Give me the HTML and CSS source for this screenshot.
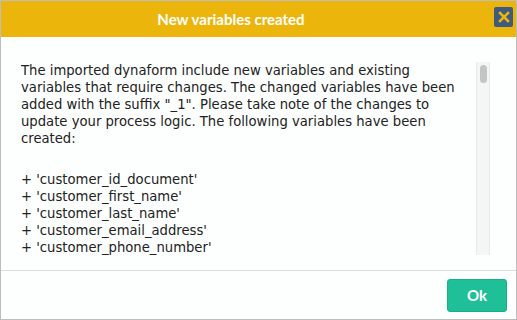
FILE: index.html
```html
<!DOCTYPE html>
<html lang="en">
<head>
    <meta charset="UTF-8">
    <title>New variables created</title>
    <link rel="stylesheet" href="styles.css">
</head>
<body>
    <div class="dialog">
        <div class="dialog-header">
            <h1>New variables created</h1>
            <button class="close-btn" aria-label="Close">
                <svg width="12" height="12" viewBox="0 0 12 12">
                    <path d="M2 2 L10 10 M10 2 L2 10" stroke="#ecb50c" stroke-width="2.6" stroke-linecap="square"/>
                </svg>
            </button>
        </div>

        <div class="dialog-body">
            <div class="scroll-box">
                <p>The imported dynaform include new variables and existing variables that require changes. The changed variables have been added with the suffix "_1". Please take note of the changes to update your process logic. The following variables have been created:</p>
                <ul class="var-list">
                    <li>+ 'customer_id_document'</li>
                    <li>+ 'customer_first_name'</li>
                    <li>+ 'customer_last_name'</li>
                    <li>+ 'customer_email_address'</li>
                    <li>+ 'customer_phone_number'</li>
                </ul>
            </div>
            <div class="scrollbar">
                <div class="scrollbar-thumb"></div>
            </div>
        </div>

        <div class="dialog-footer">
            <button class="ok-btn">Ok</button>
        </div>
    </div>
</body>
</html>
```

FILE: styles.css
```css
* {
    margin: 0;
    padding: 0;
    box-sizing: border-box;
}

body {
    width: 517px;
    height: 320px;
    background: #ffffff;
    overflow: hidden;
}

.dialog {
    width: 517px;
    height: 320px;
    border: 1px solid #bdbdbd;
    background: #fdfefe;
    display: flex;
    flex-direction: column;
}

.dialog-header {
    height: 36px;
    background: #ecb50c;
    display: flex;
    align-items: center;
    justify-content: center;
    position: relative;
}

.dialog-header h1 {
    font-family: 'Lato', sans-serif;
    font-size: 15px;
    font-weight: 700;
    color: #ffffff;
    margin-left: -55px;
}

.close-btn {
    position: absolute;
    right: 3px;
    top: 6px;
    width: 19px;
    height: 20px;
    background: #3e5a7f;
    border: none;
    border-radius: 2px;
    display: flex;
    align-items: center;
    justify-content: center;
}

.dialog-body {
    flex: 1;
    display: flex;
    gap: 8px;
    padding: 25px 26px 14px 20px;
    border-bottom: 1px solid #dcdcdc;
    min-height: 0;
}

.scroll-box {
    flex: 1;
    overflow: hidden;
    font-family: 'DejaVu Sans', Verdana, sans-serif;
    font-size: 13.2px;
    line-height: 17px;
    color: #222222;
}

.scrollbar {
    width: 14px;
    height: 193px;
    background: #f5f5f5;
    border-left: 1px solid #e8e8e8;
    border-right: 1px solid #e8e8e8;
    padding: 3px 2px 0 3px;
}

.scrollbar-thumb {
    height: 18px;
    background: #c4c4c4;
    border-radius: 4px;
}

.var-list {
    list-style: none;
    margin-top: 24px;
}

.dialog-footer {
    height: 48px;
    display: flex;
    align-items: center;
    justify-content: flex-end;
    padding-right: 9px;
}

.ok-btn {
    width: 60px;
    height: 33px;
    background: #1fbf98;
    border: 1px solid #19ad88;
    border-radius: 3px;
    color: #ffffff;
    font-family: 'Lato', sans-serif;
    font-size: 15px;
    font-weight: 700;
}
```
